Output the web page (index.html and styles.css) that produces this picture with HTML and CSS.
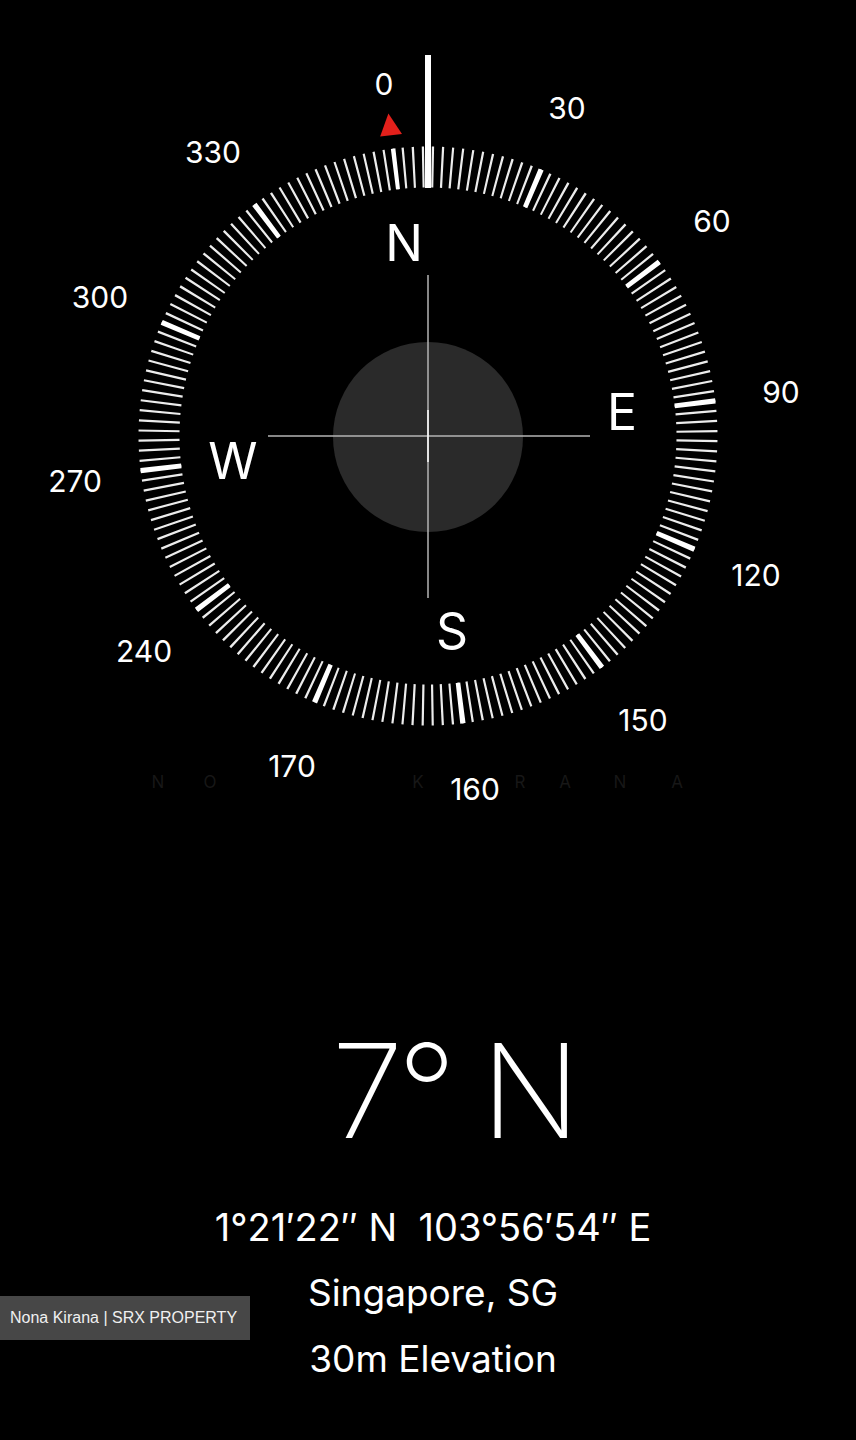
FILE: index.html
```html
<!DOCTYPE html>
<html lang="en">
<head>
    <meta charset="UTF-8">
    <meta name="viewport" content="width=device-width, initial-scale=1.0">
    <title>Compass</title>
    <link rel="stylesheet" href="styles.css">
</head>
<body>

    <main class="screen">

        <svg class="dial" viewBox="0 0 856 830" width="856" height="830">
            <!-- faint watermark, letters under the numbers are hidden -->
            <g class="watermark">
                <text x="158" y="782">N</text>
                <text x="210" y="782">O</text>
                <text x="418" y="782">K</text>
                <text x="520" y="782">R</text>
                <text x="565" y="782">A</text>
                <text x="620" y="782">N</text>
                <text x="677" y="782">A</text>
            </g>

            <!-- dial is turned -7deg, the heading reads 7 -->
            <circle class="ticks" cx="428" cy="436" r="269" transform="rotate(-97 428 436)"/>
            <circle class="ticks-major" cx="428" cy="436" r="269" transform="rotate(-97 428 436)"/>
            <polygon class="north-mark" points="428,111 417,133 439,133" transform="rotate(-7 428 436)"/>

            <circle class="bubble" cx="428" cy="437" r="95"/>
            <line class="cross" x1="268" y1="436" x2="590" y2="436"/>
            <line class="cross" x1="428" y1="275" x2="428" y2="598"/>
            <line class="cross-center" x1="428" y1="410" x2="428" y2="462"/>

            <rect class="heading-bar" x="425" y="55" width="6" height="133"/>

            <g class="cardinals">
                <text x="404" y="243">N</text>
                <text x="622" y="412">E</text>
                <text x="452" y="631">S</text>
                <text x="233" y="461">W</text>
            </g>

            <g class="degrees">
                <text x="384" y="84">0</text>
                <text x="567" y="108">30</text>
                <text x="712" y="221">60</text>
                <text x="781" y="392">90</text>
                <text x="756" y="575">120</text>
                <text x="643" y="720">150</text>
                <text x="475" y="789">160</text>
                <text x="292" y="766">170</text>
                <text x="144" y="651">240</text>
                <text x="75" y="481">270</text>
                <text x="100" y="297">300</text>
                <text x="213" y="152">330</text>
            </g>
        </svg>

        <section class="readout">
            <h1 class="heading-value">7° N</h1>
            <p class="coords">1°21′22″ N&nbsp;&nbsp;103°56′54″ E</p>
            <p>Singapore, SG</p>
            <p>30m Elevation</p>
        </section>

        <div class="credit">Nona Kirana | SRX PROPERTY</div>
    </main>

</body>
</html>
```

FILE: styles.css
```css
body {
    margin: 0;
    background-color: #000;
    color: #fff;
    font-family: Inter, "Liberation Sans", sans-serif;
}
.screen {
    position: relative;
    width: 856px;
    height: 1440px;
    overflow: hidden;
}
.dial {
    display: block;
}
.dial text {
    fill: #fff;
    text-anchor: middle;
    dominant-baseline: central;
}
.ticks {
    fill: none;
    stroke: #ececec;
    stroke-width: 41;
    stroke-dasharray: 2.2 7.1899;
    stroke-dashoffset: 1.1;
}
.ticks-major {
    fill: none;
    stroke: #fff;
    stroke-width: 41;
    stroke-dasharray: 5 135.848;
    stroke-dashoffset: 2.5;
}
.north-mark { fill: #e3201b; }
.bubble { fill: #2a2a2a; }
.cross { stroke: #b5b5b5; stroke-width: 1.5; }
.cross-center { stroke: #fff; stroke-width: 1.5; }
.heading-bar { fill: #fff; }
.cardinals text { font-size: 50px; }
.degrees text { font-size: 30px; }
.dial .watermark text {
    fill: #171717;
    font-size: 17px;
}
.readout {
    display: flex;
    flex-direction: column;
    align-items: center;
    padding-top: 196px;
    padding-left: 10px;
}
.heading-value {
    margin: 0;
    padding-left: 40px;
    font-size: 130px;
    font-weight: 200;
    line-height: 1;
    letter-spacing: -6px;
}
.readout p {
    margin: 0;
    font-size: 37px;
    line-height: 66px;
}
.readout .coords {
    margin-top: 38px;
    font-size: 38px;
}
.credit {
    position: absolute;
    left: 0;
    top: 1296px;
    width: 250px;
    height: 44px;
    box-sizing: border-box;
    padding-left: 10px;
    background-color: #474747;
    font-family: "Liberation Sans", sans-serif;
    font-size: 16px;
    line-height: 44px;
    color: #f0f0f0;
}
```
